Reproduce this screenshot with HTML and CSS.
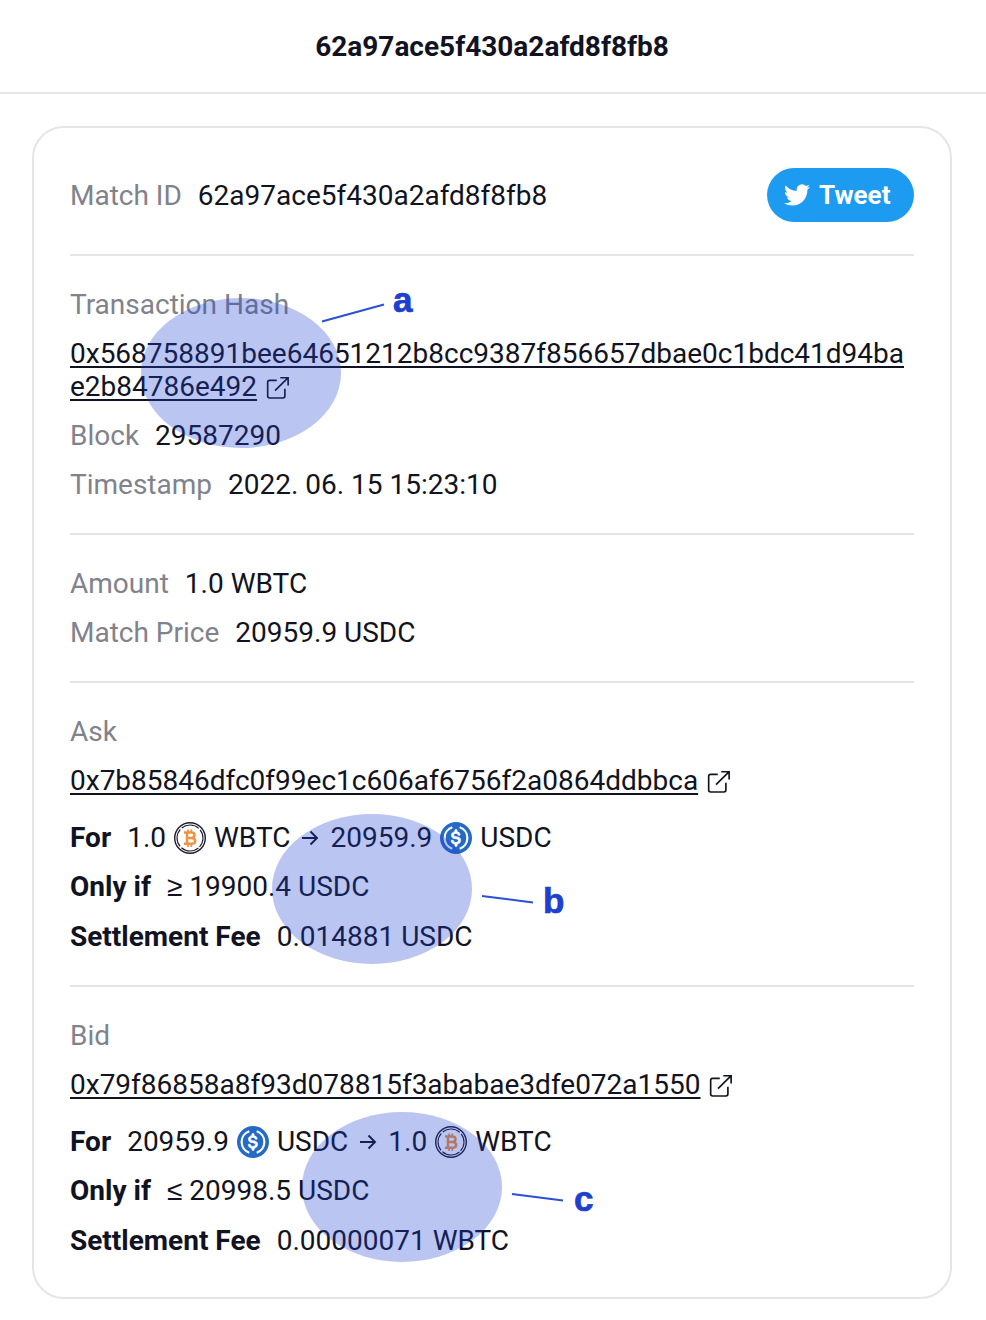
FILE: index.html
```html
<!DOCTYPE html>
<html lang="en">
<head>
<meta charset="utf-8">
<title>62a97ace5f430a2afd8f8fb8</title>
<link rel="stylesheet" href="styles.css">
</head>
<body>
<svg class="defs" aria-hidden="true">
  <symbol id="ext" viewBox="0 0 24 24">
    <path d="M11 4.500H3.700a2 2 0 0 0-2 2v14a2 2 0 0 0 2 2h13.600a2 2 0 0 0 2-2V13M14.600 1.800h8v8M22.400 2 9.200 15" fill="none" stroke="currentColor" stroke-width="1.700"/>
  </symbol>
  <symbol id="arrow" viewBox="0 0 18 18">
    <path d="M1 9h15M9.500 2.500 16 9l-6.500 6.500" fill="none" stroke="currentColor" stroke-width="1.900"/>
  </symbol>
  <symbol id="wbtc" viewBox="0 0 32 32">
    <circle cx="16" cy="16" r="15.300" fill="#fff" stroke="#201a2d" stroke-width="1.400"/>
    <circle cx="16" cy="16" r="13" fill="none" stroke="#201a2d" stroke-width="1.100" stroke-dasharray="18.420 2" stroke-dashoffset="-1" transform="rotate(45 16 16)"/>
    <path d="M10 10.600h7.300c4.300 0 4.300 5.100 0 5.300 5.200.2 5.200 5.900 0 5.900H10M13 10.600v11.200M13 15.900h4.500" fill="none" stroke="#f09242" stroke-width="2.500"/>
    <path d="M14.100 7.600v2.800M17.300 7.600v2.800M14.100 22v2.900M17.300 22v2.900" fill="none" stroke="#f09242" stroke-width="1.700"/>
  </symbol>
  <symbol id="usdc" viewBox="0 0 32 32">
    <circle cx="16" cy="16" r="16" fill="#256bc6"/>
    <path d="M20.022 18.124c0-2.124-1.280-2.852-3.840-3.156-1.828-.243-2.193-.728-2.193-1.578 0-.850.610-1.396 1.828-1.396 1.097 0 1.707.364 2.011 1.275a.458.458 0 0 0 .427.303h.975a.416.416 0 0 0 .427-.425v-.060a3.040 3.040 0 0 0-2.743-2.489V9.142c0-.243-.183-.425-.487-.486h-.915c-.243 0-.426.182-.487.486v1.396c-1.829.242-2.986 1.456-2.986 2.974 0 2.002 1.218 2.791 3.778 3.095 1.707.303 2.255.668 2.255 1.639 0 .970-.853 1.638-2.011 1.638-1.585 0-2.133-.667-2.316-1.578-.060-.242-.244-.364-.427-.364h-1.036a.416.416 0 0 0-.426.425v.060c.243 1.518 1.219 2.610 3.230 2.914v1.457c0 .242.183.425.487.485h.915c.243 0 .426-.182.487-.485V21.340c1.829-.303 3.047-1.578 3.047-3.217z" fill="#fff" stroke="#fff" stroke-width=".6" transform="translate(-2.400 -2.400) scale(1.150)"/>
    <path d="M12.300 5.300a11.300 11.300 0 0 0 0 21.400M19.700 5.300a11.300 11.300 0 0 1 0 21.400" fill="none" stroke="#fff" stroke-width="2.200"/>
  </symbol>
</svg>

<header class="topbar"><h1 class="title">62a97ace5f430a2afd8f8fb8</h1></header>

<main class="card">
  <section class="section section-head">
    <div class="row"><span class="label">Match ID</span><span>62a97ace5f430a2afd8f8fb8</span></div>
    <a class="tweet">
      <svg class="bird" viewBox="0 0 24 24"><path fill="currentColor" d="M23.954 4.569a10 10 0 0 1-2.825.775 4.958 4.958 0 0 0 2.163-2.723 9.990 9.990 0 0 1-3.127 1.184 4.920 4.920 0 0 0-8.384 4.482C7.691 8.094 4.066 6.130 1.640 3.161a4.822 4.822 0 0 0-.666 2.475c0 1.710.870 3.213 2.188 4.096a4.904 4.904 0 0 1-2.228-.616v.061a4.923 4.923 0 0 0 3.946 4.827 4.996 4.996 0 0 1-2.212.085 4.937 4.937 0 0 0 4.604 3.417 9.868 9.868 0 0 1-6.102 2.105c-.390 0-.779-.023-1.170-.067a13.995 13.995 0 0 0 7.557 2.209c9.054 0 13.999-7.496 13.999-13.986 0-.209 0-.420-.015-.630a9.936 9.936 0 0 0 2.460-2.548z"/></svg>
      <span>Tweet</span>
    </a>
  </section>

  <section class="section">
    <div class="row label">Transaction Hash</div>
    <div class="hash"><a class="link">0x568758891bee64651212b8cc9387f856657dbae0c1bdc41d94ba<br>e2b84786e492</a><svg class="ext"><use href="#ext"/></svg></div>
    <div class="row"><span class="label">Block</span><span>29587290</span></div>
    <div class="row"><span class="label">Timestamp</span><span>2022. 06. 15 15:23:10</span></div>
  </section>

  <section class="section">
    <div class="row"><span class="label">Amount</span><span>1.0 WBTC</span></div>
    <div class="row"><span class="label">Match Price</span><span>20959.9 USDC</span></div>
  </section>

  <section class="section">
    <div class="row label">Ask</div>
    <div class="hash"><a class="link">0x7b85846dfc0f99ec1c606af6756f2a0864ddbbca</a><svg class="ext"><use href="#ext"/></svg></div>
    <div class="row swap"><b>For</b><span class="pair"><span>1.0</span><svg class="coin"><use href="#wbtc"/></svg><span>WBTC</span><svg class="arrow"><use href="#arrow"/></svg><span>20959.9</span><svg class="coin"><use href="#usdc"/></svg><span>USDC</span></span></div>
    <div class="row limit"><b>Only if</b><span><span class="sign">≥</span> 19900.4 USDC</span></div>
    <div class="row"><b>Settlement Fee</b><span>0.014881 USDC</span></div>
  </section>

  <section class="section">
    <div class="row label">Bid</div>
    <div class="hash"><a class="link">0x79f86858a8f93d078815f3ababae3dfe072a1550</a><svg class="ext"><use href="#ext"/></svg></div>
    <div class="row swap"><b>For</b><span class="pair"><span>20959.9</span><svg class="coin"><use href="#usdc"/></svg><span>USDC</span><svg class="arrow"><use href="#arrow"/></svg><span>1.0</span><svg class="coin"><use href="#wbtc"/></svg><span>WBTC</span></span></div>
    <div class="row limit"><b>Only if</b><span><span class="sign">≤</span> 20998.5 USDC</span></div>
    <div class="row"><b>Settlement Fee</b><span>0.00000071 WBTC</span></div>
  </section>
</main>

<svg class="marks" viewBox="0 0 986 1320">
  <g class="spots">
    <ellipse cx="241" cy="373" rx="100" ry="75"/>
    <ellipse cx="372" cy="889" rx="100" ry="75"/>
    <ellipse cx="402" cy="1187" rx="100" ry="75"/>
  </g>
  <path class="leaders" d="M322 321.500 384 304.500M482 896l51 6.500M512 1194l51 6.500"/>
  <g class="letters">
    <text x="393" y="312">a</text>
    <text x="543" y="912.500">b</text>
    <text x="574" y="1211">c</text>
  </g>
</svg>
</body>
</html>
```
FILE: styles.css
```css
* { box-sizing: border-box; }

body {
  margin: 0;
  min-height: 1320px;
  background: #fff;
  color: #111322;
  font: 400 28px/33px Roboto, sans-serif;
}

.defs { display: none; }

.topbar {
  height: 94px;
  padding: 30px 2px 0 0;
  border-bottom: 2px solid #e5e5e5;
  text-align: center;
}

.title { margin: 0; font-size: 28px; line-height: 33px; font-weight: 700; }

.card {
  width: 920px;
  height: 1173px;
  margin: 32px 0 0 32px;
  padding: 8px 36px;
  border: 2px solid #e5e5e5;
  border-radius: 32px;
}

.section {
  display: flex;
  flex-direction: column;
  gap: 16px;
  padding: 32px 0;
  border-bottom: 2px solid #e5e5e5;
}
.section:last-child { border-bottom: 0; }
.section-head { flex-direction: row; justify-content: space-between; align-items: center; }

.row { display: flex; gap: 16px; white-space: nowrap; }
.label { color: #80828c; }
b { font-weight: 700; }

.tweet {
  display: flex;
  align-items: center;
  gap: 9px;
  width: 147px;
  height: 54px;
  padding-left: 17px;
  border-radius: 27px;
  background: #1d9bf0;
  color: #fff;
  font-size: 26px;
  font-weight: 700;
}
.bird { width: 26px; height: 26px; }

.link { text-decoration: underline; text-decoration-thickness: 2px; text-underline-offset: 3px; }
.hash { max-height: 66px; white-space: nowrap; }
.ext { width: 23.5px; height: 23.5px; margin-left: 8.5px; vertical-align: -3.5px; }

.swap { height: 41px; align-items: flex-end; }
.pair { display: flex; align-items: flex-end; gap: 8px; }
.coin { width: 32px; height: 32px; }
.arrow { width: 18px; height: 18px; margin: 0 3px 7px; }
.limit { height: 34px; }
.sign { font-family: "Noto Sans", sans-serif; font-weight: 300; line-height: 1; }

.marks { position: absolute; top: 0; left: 0; width: 986px; height: 1320px; }
.spots { fill: #1d40cf; fill-opacity: .3; }
.leaders { fill: none; stroke: #2a50d8; stroke-width: 2; }
.letters { fill: #1d40cf; stroke: #1d40cf; stroke-width: .7; font: 700 35px "Liberation Sans", Arial, sans-serif; }
```
